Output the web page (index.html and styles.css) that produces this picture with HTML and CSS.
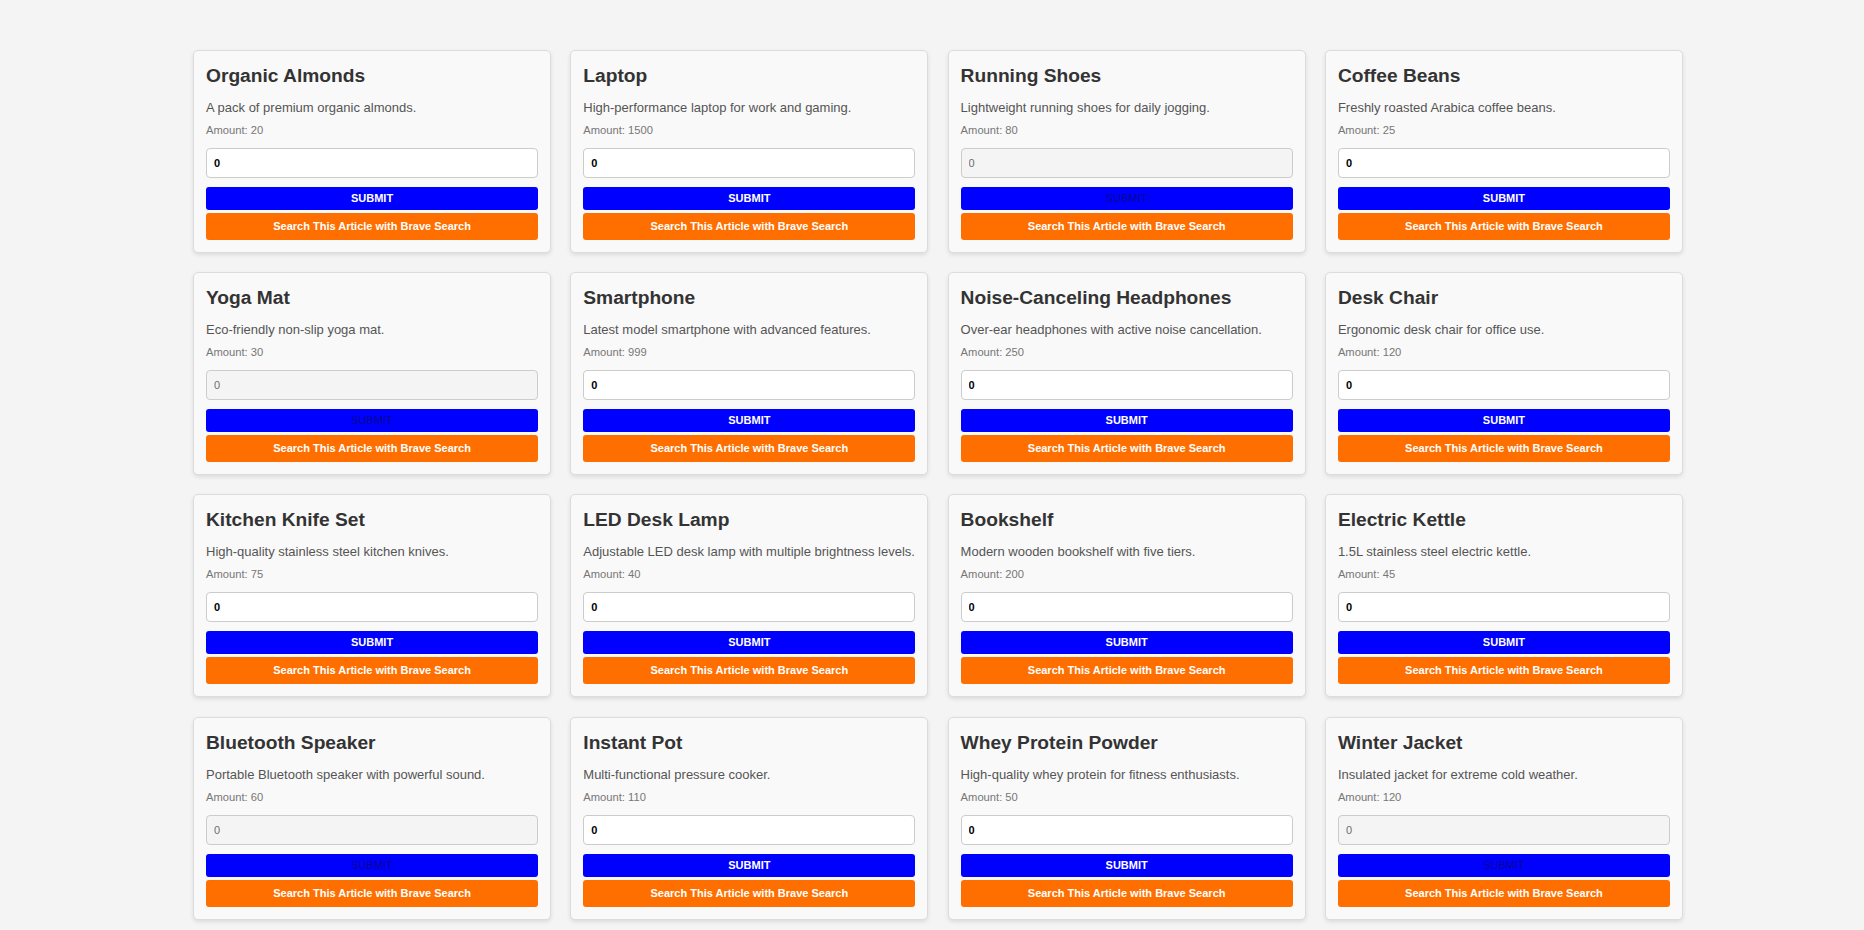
FILE: index.html
```html
<!DOCTYPE html>
<html lang="en">
<head>
<meta charset="utf-8">
<title>Products</title>
<link rel="stylesheet" href="styles.css">
</head>
<body>
<main class="grid">
  <div class="card">
    <h3 class="title">Organic Almonds</h3>
    <p class="desc">A pack of premium organic almonds.</p>
    <p class="amount">Amount: 20</p>
    <input class="qty" type="number" value="0">
    <button class="submit">SUBMIT</button>
    <button class="brave">Search This Article with Brave Search</button>
  </div>
  <div class="card">
    <h3 class="title">Laptop</h3>
    <p class="desc">High-performance laptop for work and gaming.</p>
    <p class="amount">Amount: 1500</p>
    <input class="qty" type="number" value="0">
    <button class="submit">SUBMIT</button>
    <button class="brave">Search This Article with Brave Search</button>
  </div>
  <div class="card">
    <h3 class="title">Running Shoes</h3>
    <p class="desc">Lightweight running shoes for daily jogging.</p>
    <p class="amount">Amount: 80</p>
    <input class="qty" type="number" value="0" disabled>
    <button class="submit" disabled>SUBMIT</button>
    <button class="brave">Search This Article with Brave Search</button>
  </div>
  <div class="card">
    <h3 class="title">Coffee Beans</h3>
    <p class="desc">Freshly roasted Arabica coffee beans.</p>
    <p class="amount">Amount: 25</p>
    <input class="qty" type="number" value="0">
    <button class="submit">SUBMIT</button>
    <button class="brave">Search This Article with Brave Search</button>
  </div>

  <div class="card">
    <h3 class="title">Yoga Mat</h3>
    <p class="desc">Eco-friendly non-slip yoga mat.</p>
    <p class="amount">Amount: 30</p>
    <input class="qty" type="number" value="0" disabled>
    <button class="submit" disabled>SUBMIT</button>
    <button class="brave">Search This Article with Brave Search</button>
  </div>
  <div class="card">
    <h3 class="title">Smartphone</h3>
    <p class="desc">Latest model smartphone with advanced features.</p>
    <p class="amount">Amount: 999</p>
    <input class="qty" type="number" value="0">
    <button class="submit">SUBMIT</button>
    <button class="brave">Search This Article with Brave Search</button>
  </div>
  <div class="card">
    <h3 class="title">Noise-Canceling Headphones</h3>
    <p class="desc">Over-ear headphones with active noise cancellation.</p>
    <p class="amount">Amount: 250</p>
    <input class="qty" type="number" value="0">
    <button class="submit">SUBMIT</button>
    <button class="brave">Search This Article with Brave Search</button>
  </div>
  <div class="card">
    <h3 class="title">Desk Chair</h3>
    <p class="desc">Ergonomic desk chair for office use.</p>
    <p class="amount">Amount: 120</p>
    <input class="qty" type="number" value="0">
    <button class="submit">SUBMIT</button>
    <button class="brave">Search This Article with Brave Search</button>
  </div>

  <div class="card">
    <h3 class="title">Kitchen Knife Set</h3>
    <p class="desc">High-quality stainless steel kitchen knives.</p>
    <p class="amount">Amount: 75</p>
    <input class="qty" type="number" value="0">
    <button class="submit">SUBMIT</button>
    <button class="brave">Search This Article with Brave Search</button>
  </div>
  <div class="card">
    <h3 class="title">LED Desk Lamp</h3>
    <p class="desc">Adjustable LED desk lamp with multiple brightness levels.</p>
    <p class="amount">Amount: 40</p>
    <input class="qty" type="number" value="0">
    <button class="submit">SUBMIT</button>
    <button class="brave">Search This Article with Brave Search</button>
  </div>
  <div class="card">
    <h3 class="title">Bookshelf</h3>
    <p class="desc">Modern wooden bookshelf with five tiers.</p>
    <p class="amount">Amount: 200</p>
    <input class="qty" type="number" value="0">
    <button class="submit">SUBMIT</button>
    <button class="brave">Search This Article with Brave Search</button>
  </div>
  <div class="card">
    <h3 class="title">Electric Kettle</h3>
    <p class="desc">1.5L stainless steel electric kettle.</p>
    <p class="amount">Amount: 45</p>
    <input class="qty" type="number" value="0">
    <button class="submit">SUBMIT</button>
    <button class="brave">Search This Article with Brave Search</button>
  </div>

  <div class="card">
    <h3 class="title">Bluetooth Speaker</h3>
    <p class="desc">Portable Bluetooth speaker with powerful sound.</p>
    <p class="amount">Amount: 60</p>
    <input class="qty" type="number" value="0" disabled>
    <button class="submit" disabled>SUBMIT</button>
    <button class="brave">Search This Article with Brave Search</button>
  </div>
  <div class="card">
    <h3 class="title">Instant Pot</h3>
    <p class="desc">Multi-functional pressure cooker.</p>
    <p class="amount">Amount: 110</p>
    <input class="qty" type="number" value="0">
    <button class="submit">SUBMIT</button>
    <button class="brave">Search This Article with Brave Search</button>
  </div>
  <div class="card">
    <h3 class="title">Whey Protein Powder</h3>
    <p class="desc">High-quality whey protein for fitness enthusiasts.</p>
    <p class="amount">Amount: 50</p>
    <input class="qty" type="number" value="0">
    <button class="submit">SUBMIT</button>
    <button class="brave">Search This Article with Brave Search</button>
  </div>
  <div class="card">
    <h3 class="title">Winter Jacket</h3>
    <p class="desc">Insulated jacket for extreme cold weather.</p>
    <p class="amount">Amount: 120</p>
    <input class="qty" type="number" value="0" disabled>
    <button class="submit" disabled>SUBMIT</button>
    <button class="brave">Search This Article with Brave Search</button>
  </div>
</main>
</body>
</html>
```
FILE: styles.css
```css
html, body {
  margin: 0;
  padding: 0;
  background: #f4f4f4;
  font-family: "Liberation Sans", Arial, sans-serif;
}

.grid {
  display: grid;
  grid-template-columns: repeat(4, 1fr);
  gap: 19.2px;
  width: 1490px;
  padding: 50px 0 40px 193px;
}

.card {
  display: flex;
  flex-direction: column;
  background: #f9f9f9;
  border: 1px solid #dcdcdc;
  border-radius: 5px;
  box-shadow: 0 2px 4px rgba(0, 0, 0, 0.1);
  padding: 13px 12px 12px;
}

.title {
  margin: 0 0 13px;
  font-size: 19.2px;
  line-height: 23px;
  font-weight: bold;
  color: #333;
}

.desc {
  margin: 0 0 9px;
  font-size: 13px;
  line-height: 15px;
  color: #555;
}

.amount {
  margin: 0 0 11px;
  font-size: 11.2px;
  line-height: 13px;
  color: #777;
}

.qty {
  box-sizing: border-box;
  height: 30px;
  width: 100%;
  margin: 0;
  padding: 0 7px;
  border: 1px solid #ccc;
  border-radius: 4px;
  background: #fff;
  color: #000;
  font-family: "Liberation Sans", Arial, sans-serif;
  font-size: 11px;
  font-weight: bold;
}

.qty:disabled {
  background: #f4f4f4;
  color: #6d6d6d;
  font-weight: normal;
}

.qty::-webkit-inner-spin-button,
.qty::-webkit-outer-spin-button {
  -webkit-appearance: none;
  margin: 0;
}

.submit,
.brave {
  display: block;
  width: 100%;
  border: none;
  border-radius: 3px;
  color: #fff;
  font-family: "Liberation Sans", Arial, sans-serif;
  font-size: 11px;
  line-height: 13px;
  font-weight: bold;
  cursor: pointer;
}

.submit {
  margin: 9px 0 0;
  padding: 5px 0;
  background: #0000ff;
}

.submit:disabled {
  color: rgba(16, 16, 16, 0.5);
  font-weight: normal;
  cursor: default;
}

.brave {
  margin: 3px 0 0;
  padding: 7px 0;
  background: #ff6f00;
}
```
